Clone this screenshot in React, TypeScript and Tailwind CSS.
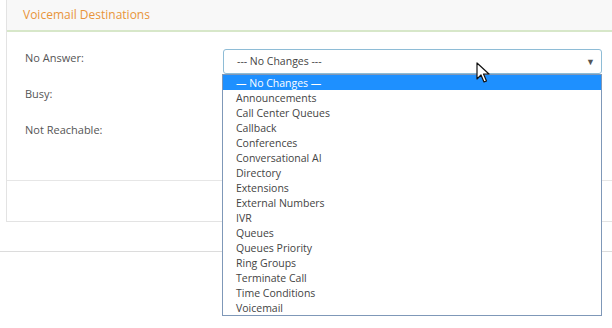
import React from "react";

const opciones = [
  "Announcements",
  "Call Center Queues",
  "Callback",
  "Conferences",
  "Conversational AI",
  "Directory",
  "Extensions",
  "External Numbers",
  "IVR",
  "Queues",
  "Queues Priority",
  "Ring Groups",
  "Terminate Call",
  "Time Conditions",
  "Voicemail",
];

function Cursor() {
  return (
    <svg width="14" height="22" viewBox="0 0 14 22" className="absolute left-[476px] top-[62px]">
      <path d="M1 1 L1 17 L5 13 L8 20 L10.5 19 L7.5 12 L13 12 Z" fill="white" stroke="#111" strokeWidth="1.2" strokeLinejoin="round" />
    </svg>
  );
}

export default function App() {
  return (
    <div className="relative w-[612px] h-[328px] overflow-hidden bg-white text-[#555]" style={{ fontFamily: '"Open Sans", sans-serif' }}>
      <div className="ml-[6px] w-[620px] border-l border-b border-[#e3e3e3]">
        <div className="h-[32px] bg-[#f8f8f8] border-b-2 border-[#d7e7c9] pl-[16px] pt-[6px] text-[12px] text-[#e8953a]">
          Voicemail Destinations
        </div>
        <div className="h-[148px] pt-[17px] text-[11px]">
          <div className="flex h-[37px]">
            <div className="w-[216px] pl-[18px] pt-[1px]">No Answer:</div>
            <div className="w-[379px] h-[25px] border border-[#8ebcd6] rounded-[3px] flex items-center justify-between pl-[13px] pr-[6px] text-[10.5px] text-[#444]">
              <span>--- No Changes ---</span>
              <span className="text-[9px] text-[#555]">▼</span>
            </div>
          </div>
          <div className="flex h-[36px]">
            <div className="w-[216px] pl-[18px]">Busy:</div>
          </div>
          <div className="flex">
            <div className="w-[216px] pl-[18px]">Not Reachable:</div>
          </div>
        </div>
        <div className="h-[41px] border-t border-[#e6e6e6]" />
      </div>
      <div className="mt-[29px] border-t border-[#dcdcdc]" />

      <ul className="absolute left-[222px] top-[74px] w-[380px] border border-[#7f98b8] bg-white text-[10.5px] text-[#444] leading-[17px]">
        <li className="h-[15px] bg-[#1e90ff] text-white pl-[13px]">— No Changes —</li>
        {opciones.map((o) => (
          <li key={o} className="h-[15px] pl-[13px]">{o}</li>
        ))}
      </ul>
      <Cursor />
    </div>
  );
}
